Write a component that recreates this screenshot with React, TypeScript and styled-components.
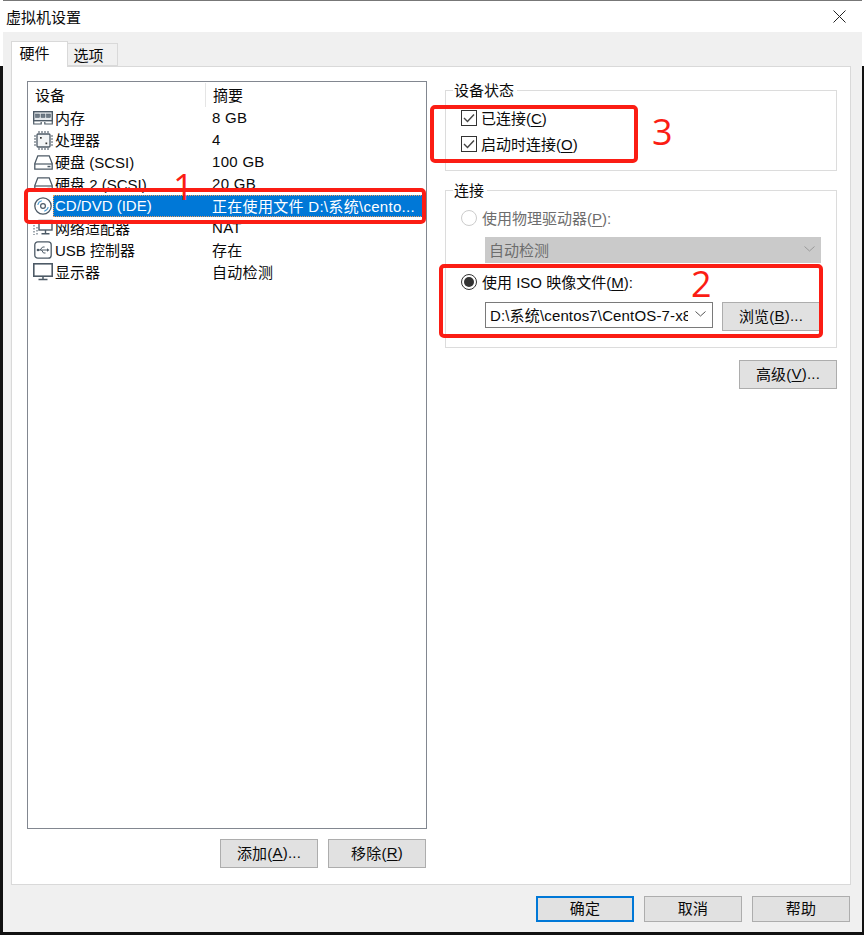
import React from "react";
import styled, { createGlobalStyle } from "styled-components";

const GlobalStyle = createGlobalStyle`
  html, body {
    margin: 0;
    padding: 0;
    background: #111;
  }
`;

const FONT = `"Liberation Sans", "Noto Sans CJK SC", sans-serif`;

const Screen = styled.div`
  position: relative;
  width: 864px;
  height: 935px;
  overflow: hidden;
  background: linear-gradient(#fff 0 66px, #111 66px);
  font-family: ${FONT};
  font-size: 15px;
  color: #0a0a0a;
`;

const Window = styled.div`
  display: flex;
  flex-direction: column;
  width: 859px;
  height: 932px;
  margin-left: 3px;
  background: #f0f0f0;
  border-top: 1px solid #777;
  box-sizing: border-box;
`;

const TitleBar = styled.div`
  display: flex;
  align-items: center;
  justify-content: space-between;
  height: 31px;
  flex: none;
  padding: 0 16px 0 3px;
  background: #fff;
`;

const TabBar = styled.div`
  display: flex;
  align-items: flex-end;
  height: 34px;
  flex: none;
  padding-left: 8px;
`;

const Tab = styled.div<{ $active?: boolean }>`
  position: relative;
  box-sizing: border-box;
  display: flex;
  justify-content: center;
  align-items: center;
  width: ${p => (p.$active ? "57px" : "50px")};
  height: ${p => (p.$active ? "26px" : "23px")};
  border: 1px solid #d9d9d9;
  border-left-width: ${p => (p.$active ? "1px" : "0")};
  border-bottom-width: ${p => (p.$active ? "0" : "1px")};
  background: ${p => (p.$active ? "#fff" : "#f0f0f0")};
  margin-bottom: ${p => (p.$active ? "-1px" : "0")};
  z-index: ${p => (p.$active ? 1 : 0)};
  padding-right: ${p => (p.$active ? "10px" : "8px")};
  padding-bottom: ${p => (p.$active ? "4px" : "0")};
`;

const Panel = styled.div`
  box-sizing: border-box;
  display: flex;
  height: 819px;
  width: 840px;
  flex: none;
  margin-left: 8px;
  padding: 14px 15px 15px 15px;
  background: #fff;
  border: 1px solid #d9d9d9;
`;

const LeftColumn = styled.div`
  display: flex;
  flex-direction: column;
  width: 400px;
  flex: none;
`;

const DeviceList = styled.div`
  box-sizing: border-box;
  height: 748px;
  flex: none;
  border: 1px solid #828790;
  padding: 1px 0 0 0;
`;

const ListHeader = styled.div`
  display: flex;
  align-items: center;
  height: 24px;
`;

const HeaderCell = styled.div<{ $divider?: boolean }>`
  box-sizing: border-box;
  height: 24px;
  line-height: 26px;
  padding-left: 7px;
  width: ${p => (p.$divider ? "auto" : "178px")};
  border-right: ${p => (p.$divider ? "0" : "1px solid #e5e5e5")};
`;

const Row = styled.div`
  display: flex;
  align-items: center;
  height: 22px;
  white-space: nowrap;
`;

const IconSlot = styled.div`
  display: flex;
  justify-content: center;
  align-items: center;
  width: 20px;
  margin-left: 5px;
  flex: none;
  height: 22px;
`;

const RowBody = styled.div<{ $selected?: boolean }>`
  display: flex;
  align-items: center;
  height: 22px;
  width: 370px;
  flex: none;
  padding-bottom: 1px;
  box-sizing: border-box;
  background: ${p => (p.$selected ? "#0078d7" : "transparent")};
  color: ${p => (p.$selected ? "#fff" : "#0a0a0a")};
  outline: ${p => (p.$selected ? "1px dotted #f0a060" : "none")};
  outline-offset: -1px;
`;

const DeviceName = styled.div`
  width: 159px;
  flex: none;
  padding-left: 2px;
  box-sizing: border-box;
`;

const Summary = styled.div`
  letter-spacing: 0.3px;
`;

const ListActions = styled.div`
  display: flex;
  justify-content: flex-end;
  gap: 10px;
  margin: 10px 1px 0 0;
`;

const Button = styled.div<{ $primary?: boolean }>`
  box-sizing: border-box;
  display: flex;
  justify-content: center;
  align-items: center;
  width: 98px;
  height: 29px;
  padding-bottom: 2px;
  background: #e1e1e1;
  border: ${p => (p.$primary ? "2px solid #0078d7" : "1px solid #adadad")};
  white-space: nowrap;
  letter-spacing: 0.2px;
`;

const FooterButton = styled(Button)`
  height: 26px;
  padding-bottom: 3px;
`;

const RightColumn = styled.div`
  display: flex;
  flex-direction: column;
  width: 392px;
  margin-left: 18px;
  flex: none;
`;

const Group = styled.div<{ $h: number; $top: number }>`
  position: relative;
  box-sizing: border-box;
  height: ${p => p.$h}px;
  border: 1px solid #dcdcdc;
  margin-top: ${p => p.$top}px;
  flex: none;
`;

const GroupTitle = styled.div`
  position: absolute;
  top: -9px;
  left: 7px;
  padding: 0 3px 0 1px;
  background: #fff;
  line-height: 17px;
`;

const GroupBody = styled.div`
  display: flex;
  flex-direction: column;
  padding: 14px 0 0 15px;
`;

const OptionRow = styled.div<{ $disabled?: boolean; $top?: number }>`
  display: flex;
  align-items: center;
  gap: 4px;
  height: 26px;
  margin-top: ${p => p.$top ?? 0}px;
  white-space: nowrap;
  color: ${p => (p.$disabled ? "#6d6d6d" : "#0a0a0a")};
`;

const OptionLabel = styled.span`
  margin-bottom: 2px;
`;

const CheckBox = styled.div`
  box-sizing: border-box;
  width: 16px;
  height: 16px;
  border: 1px solid #333;
  display: flex;
  justify-content: center;
  align-items: center;
  background: #fff;
`;

const Radio = styled.div<{ $on?: boolean }>`
  box-sizing: border-box;
  width: 16px;
  height: 16px;
  margin-right: 1px;
  border-radius: 50%;
  border: 1px solid ${p => (p.$on ? "#333" : "#ccc")};
  display: flex;
  justify-content: center;
  align-items: center;
  background: #fff;
  &::after {
    content: "";
    display: ${p => (p.$on ? "block" : "none")};
    width: 10px;
    height: 10px;
    border-radius: 50%;
    background: #333;
  }
`;

const DisabledSelect = styled.div`
  box-sizing: border-box;
  display: flex;
  align-items: center;
  justify-content: space-between;
  width: 336px;
  height: 26px;
  margin: 6px 0 0 24px;
  padding: 0 5px 2px 3px;
  background: #cacaca;
  border: 1px solid #cacaca;
  color: #6d6d6d;
`;

const IsoRow = styled.div`
  display: flex;
  align-items: flex-start;
  margin: 7px 0 0 24px;
  gap: 9px;
`;

const IsoSelect = styled.div`
  box-sizing: border-box;
  display: flex;
  align-items: center;
  justify-content: space-between;
  width: 228px;
  height: 26px;
  padding: 0 6px 2px 4px;
  background: #fff;
  border: 1px solid #7a7a7a;
`;

const IsoValue = styled.div`
  width: 198px;
  overflow: hidden;
  white-space: nowrap;
  letter-spacing: 0.15px;
`;

const AdvancedRow = styled.div`
  display: flex;
  justify-content: flex-end;
  margin-top: 12px;
`;

const Footer = styled.div`
  display: flex;
  justify-content: flex-end;
  gap: 10px;
  padding: 11px 12px 0 0;
`;

const Key = styled.span`
  text-decoration: underline;
  text-underline-offset: 2px;
`;

const Mark = styled.div<{ $x: number; $y: number; $w: number; $h: number }>`
  position: absolute;
  left: ${p => p.$x}px;
  top: ${p => p.$y}px;
  width: ${p => p.$w}px;
  height: ${p => p.$h}px;
  box-sizing: border-box;
  border: 4px solid #fb1d14;
  border-radius: 5px;
  pointer-events: none;
`;

const MarkNumber = styled.div<{ $x: number; $y: number }>`
  position: absolute;
  left: ${p => p.$x}px;
  top: ${p => p.$y}px;
  color: #fb1d14;
  font-size: 36px;
  line-height: 36px;
  font-family: "Open Sans", "Liberation Sans", sans-serif;
  pointer-events: none;
`;

const Chevron = ({ color = "#555" }: { color?: string }) => (
  <svg width="11" height="6" viewBox="0 0 11 6" fill="none">
    <path d="M0.5 0.5L5.5 5L10.5 0.5" stroke={color} strokeWidth="1" />
  </svg>
);

const Tick = () => (
  <svg width="12" height="10" viewBox="0 0 12 10" fill="none">
    <path d="M1 5L4.5 8.5L11 1.5" stroke="#444" strokeWidth="1.4" />
  </svg>
);

const MemoryIcon = () => (
  <svg width="20" height="14" viewBox="0 0 20 14" fill="none" stroke="#4d5a66">
    <rect x="0.7" y="0.7" width="18.6" height="9" fill="#e4e8eb" strokeWidth="1.4" />
    <rect x="2.5" y="3" width="4" height="3.5" fill="#6f7b86" strokeWidth="0.5" />
    <rect x="8" y="3" width="4" height="3.5" fill="#6f7b86" strokeWidth="0.5" />
    <rect x="13.5" y="3" width="4" height="3.5" fill="#6f7b86" strokeWidth="0.5" />
    <path d="M0.7 10v3h7.5v-2M11.8 11v2h7.5v-3" strokeWidth="1.2" />
  </svg>
);

const CpuIcon = () => (
  <svg width="19" height="19" viewBox="0 0 19 19" fill="none" stroke="#4d5a66">
    <rect x="3" y="3" width="13" height="13" rx="1" fill="#f2f4f5" strokeWidth="1.3" />
    <path
      d="M5 0v2M8 0v2M11 0v2M14 0v2M5 17v2M8 17v2M11 17v2M14 17v2M0 5h2M0 8h2M0 11h2M0 14h2M17 5h2M17 8h2M17 11h2M17 14h2"
      strokeWidth="1.1"
    />
    <rect x="6" y="6" width="1.7" height="1.7" fill="#333" stroke="none" />
    <rect x="11.5" y="11.5" width="1.7" height="1.7" fill="#333" stroke="none" />
  </svg>
);

const DiskIcon = () => (
  <svg width="19" height="15" viewBox="0 0 19 15" fill="none" stroke="#4d5a66">
    <path d="M3.8 0.8h11.4l3 7.7v5.7H0.8V8.5z" fill="#fff" strokeWidth="1.3" />
    <path d="M0.8 9h17.4" strokeWidth="1.2" />
    <rect x="13.5" y="10.8" width="3" height="1.5" fill="#4d5a66" stroke="none" />
  </svg>
);

const CdIcon = () => (
  <svg width="18" height="18" viewBox="0 0 18 18" fill="none" stroke="#4d5a66">
    <circle cx="9" cy="9" r="8.2" fill="#fff" strokeWidth="1.3" />
    <circle cx="9" cy="9" r="2.4" fill="#fff" strokeWidth="1.2" />
    <path d="M3.8 8a5.4 5.4 0 0 1 4-4.2M14.2 10a5.4 5.4 0 0 1-4 4.2" stroke="#4d9bd0" strokeWidth="1.1" />
  </svg>
);

const NetworkIcon = () => (
  <svg width="20" height="18" viewBox="0 0 20 18" fill="none" stroke="#4d5a66">
    <rect x="6" y="1.5" width="13" height="9.5" fill="#fff" strokeWidth="1.4" />
    <path d="M12.5 11v3M8.5 14.7h8" strokeWidth="1.4" />
    <path d="M1 3v13M4 8v8" stroke="#8a949d" strokeDasharray="1.5 1.5" strokeWidth="1.6" />
  </svg>
);

const UsbIcon = () => (
  <svg width="18" height="18" viewBox="0 0 18 18" fill="none" stroke="#4d5a66">
    <rect x="0.8" y="0.8" width="16.4" height="16.4" rx="3" fill="#fff" strokeWidth="1.3" />
    <path d="M3.5 9h10M6 9l2.6-3h2M7.5 9l2 3h2" strokeWidth="1" />
    <path d="M13 7.3l2.5 1.7-2.5 1.7z" fill="#4d5a66" stroke="none" />
    <circle cx="4" cy="9" r="1.3" fill="#4d5a66" stroke="none" />
  </svg>
);

const MonitorIcon = () => (
  <svg width="20" height="18" viewBox="0 0 20 18" fill="none" stroke="#4d5a66">
    <rect x="0.8" y="0.8" width="18.4" height="12.4" fill="#fff" strokeWidth="1.6" />
    <path d="M10 13.5v2.5M5.5 16.5h9" strokeWidth="1.5" />
  </svg>
);

type Device = {
  name: string;
  summary: string;
  icon: React.ReactNode;
  selected?: boolean;
};

const devices: Device[] = [
  { name: "内存", summary: "8 GB", icon: <MemoryIcon /> },
  { name: "处理器", summary: "4", icon: <CpuIcon /> },
  { name: "硬盘 (SCSI)", summary: "100 GB", icon: <DiskIcon /> },
  { name: "硬盘 2 (SCSI)", summary: "20 GB", icon: <DiskIcon /> },
  { name: "CD/DVD (IDE)", summary: "正在使用文件 D:\\系统\\cento...", icon: <CdIcon />, selected: true },
  { name: "网络适配器", summary: "NAT", icon: <NetworkIcon /> },
  { name: "USB 控制器", summary: "存在", icon: <UsbIcon /> },
  { name: "显示器", summary: "自动检测", icon: <MonitorIcon /> },
];

const App: React.FC = () => {
  return (
    <Screen>
      <GlobalStyle />
      <Window>
        <TitleBar>
          <span>虚拟机设置</span>
          <svg width="13" height="13" viewBox="0 0 13 13" fill="none" stroke="#222">
            <path d="M0.5 0.5L12.5 12.5M12.5 0.5L0.5 12.5" strokeWidth="1" />
          </svg>
        </TitleBar>
        <TabBar>
          <Tab $active>硬件</Tab>
          <Tab>选项</Tab>
        </TabBar>
        <Panel>
          <LeftColumn>
            <DeviceList>
              <ListHeader>
                <HeaderCell>设备</HeaderCell>
                <HeaderCell $divider>摘要</HeaderCell>
              </ListHeader>
              {devices.map(d => (
                <Row key={d.name}>
                  <IconSlot>{d.icon}</IconSlot>
                  <RowBody $selected={d.selected}>
                    <DeviceName>{d.name}</DeviceName>
                    <Summary>{d.summary}</Summary>
                  </RowBody>
                </Row>
              ))}
            </DeviceList>
            <ListActions>
              <Button>
                添加(<Key>A</Key>)...
              </Button>
              <Button>
                移除(<Key>R</Key>)
              </Button>
            </ListActions>
          </LeftColumn>
          <RightColumn>
            <Group $h={81} $top={9}>
              <GroupTitle>设备状态</GroupTitle>
              <GroupBody>
                <OptionRow>
                  <CheckBox>
                    <Tick />
                  </CheckBox>
                  <OptionLabel>
                    已连接(<Key>C</Key>)
                  </OptionLabel>
                </OptionRow>
                <OptionRow>
                  <CheckBox>
                    <Tick />
                  </CheckBox>
                  <OptionLabel>
                    启动时连接(<Key>O</Key>)
                  </OptionLabel>
                </OptionRow>
              </GroupBody>
            </Group>
            <Group $h={158} $top={19}>
              <GroupTitle>连接</GroupTitle>
              <GroupBody>
                <OptionRow $disabled>
                  <Radio />
                  <OptionLabel>
                    使用物理驱动器(<Key>P</Key>):
                  </OptionLabel>
                </OptionRow>
                <DisabledSelect>
                  <span>自动检测</span>
                  <Chevron color="#9a9a9a" />
                </DisabledSelect>
                <OptionRow $top={6}>
                  <Radio $on />
                  <OptionLabel>
                    使用 ISO 映像文件(<Key>M</Key>):
                  </OptionLabel>
                </OptionRow>
                <IsoRow>
                  <IsoSelect>
                    <IsoValue>D:\系统\centos7\CentOS-7-x86_64</IsoValue>
                    <Chevron />
                  </IsoSelect>
                  <Button>
                    浏览(<Key>B</Key>)...
                  </Button>
                </IsoRow>
              </GroupBody>
            </Group>
            <AdvancedRow>
              <Button>
                高级(<Key>V</Key>)...
              </Button>
            </AdvancedRow>
          </RightColumn>
        </Panel>
        <Footer>
          <FooterButton $primary>确定</FooterButton>
          <FooterButton>取消</FooterButton>
          <FooterButton>帮助</FooterButton>
        </Footer>
      </Window>
      <Mark $x={24} $y={188} $w={402} $h={36} />
      <Mark $x={430} $y={105} $w={208} $h={58} />
      <Mark $x={439} $y={264} $w={384} $h={74} />
      <MarkNumber $x={173} $y={169}>1</MarkNumber>
      <MarkNumber $x={691} $y={266}>2</MarkNumber>
      <MarkNumber $x={652} $y={114}>3</MarkNumber>
    </Screen>
  );
};

export default App;
